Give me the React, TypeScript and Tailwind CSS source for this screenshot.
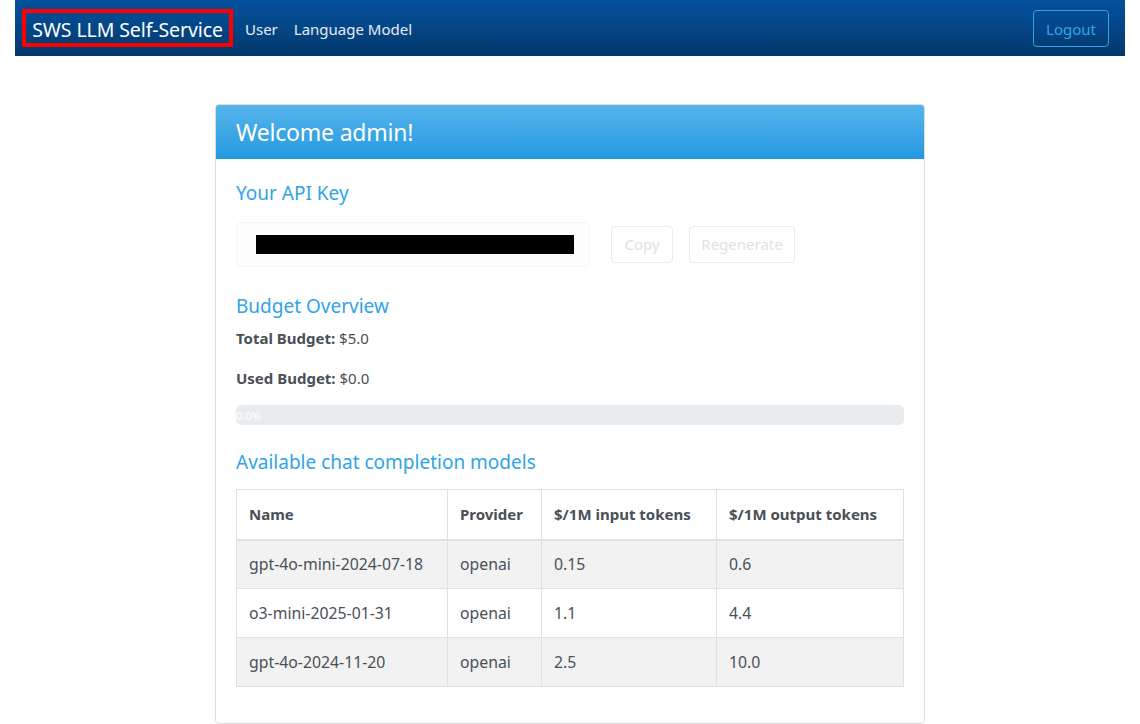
import React from "react";

const rows = [
  { name: "gpt-4o-mini-2024-07-18", provider: "openai", inp: "0.15", out: "0.6" },
  { name: "o3-mini-2025-01-31", provider: "openai", inp: "1.1", out: "4.4" },
  { name: "gpt-4o-2024-11-20", provider: "openai", inp: "2.5", out: "10.0" },
];

export default function App() {
  return (
    <div className="min-h-[724px] bg-white text-[#495057]" style={{ fontFamily: '"Noto Sans", "Open Sans", sans-serif' }}>
      <div className="mx-[15px] w-[1110px] h-[56px] flex items-center bg-gradient-to-b from-[#04519b] via-[#044687] to-[#033769]">
        <div className="ml-[7px] h-[38px] w-[211px] border-4 border-[#ff0000] flex items-center justify-center pt-[3px]">
          <span className="text-white text-[19.5px] leading-none tracking-[-0.1px]">SWS LLM Self-Service</span>
        </div>
        <a className="ml-[12px] mt-[3px] text-[15px] text-white/90">User</a>
        <a className="ml-[16px] mt-[3px] text-[15px] text-white/90">Language Model</a>
        <div className="flex-1" />
        <button className="mr-[16px] h-[37px] w-[76px] rounded-[4px] border border-[#2fa4e7] text-[#2fa4e7] text-[15px] pt-[2px]">Logout</button>
      </div>

      <div className="ml-[215px] mt-[48px] w-[710px] border border-[#dcdcdc] rounded-[4px] overflow-hidden">
        <div className="h-[54px] flex items-center px-[20px] bg-gradient-to-b from-[#54b4eb] to-[#2199e0]">
          <span className="text-white text-[23px] tracking-[-0.2px]">Welcome admin!</span>
        </div>
        <div className="px-[20px] pt-[22px] pb-[36px]">
          <h3 className="text-[#2fa4e7] text-[19px] leading-[24px]">Your API Key</h3>
          <div className="mt-[17px] flex items-center">
            <div className="w-[354px] h-[45px] bg-[#fdfdfd] border border-[#f6f6f6] rounded-[4px] flex items-center pl-[19px]">
              <div className="w-[318px] h-[19px] bg-black" />
            </div>
            <button className="ml-[21px] w-[62px] h-[37px] border border-[#e9ecef] rounded-[4px] text-[#dee2e6] text-[15px]">Copy</button>
            <button className="ml-[16px] w-[106px] h-[37px] border border-[#e9ecef] rounded-[4px] text-[#dee2e6] text-[15px]">Regenerate</button>
          </div>
          <h3 className="mt-[27px] text-[#2fa4e7] text-[19px] leading-[24px]">Budget Overview</h3>
          <p className="mt-[8px] text-[15px] leading-[24px]"><b className="font-bold">Total Budget:</b> $5.0</p>
          <p className="mt-[16px] text-[15px] leading-[24px]"><b className="font-bold">Used Budget:</b> $0.0</p>
          <div className="mt-[15px] h-[20px] w-[668px] bg-[#e9ecef] rounded-[5px] flex items-center">
            <span className="text-white text-[11px] leading-none">0.0%</span>
          </div>
          <h3 className="mt-[25px] text-[#2fa4e7] text-[19px] leading-[24px]">Available chat completion models</h3>
          <table className="mt-[15px] w-[668px] border-collapse text-[15px]">
            <thead>
              <tr className="h-[50px] border-b-2 border-[#dee2e6]">
                <th className="w-[211px] border border-[#dee2e6] border-b-2 text-left font-bold px-[12px]">Name</th>
                <th className="w-[94px] border border-[#dee2e6] border-b-2 text-left font-bold px-[12px]">Provider</th>
                <th className="w-[175px] border border-[#dee2e6] border-b-2 text-left font-bold px-[12px]">$/1M input tokens</th>
                <th className="border border-[#dee2e6] border-b-2 text-left font-bold px-[12px]">$/1M output tokens</th>
              </tr>
            </thead>
            <tbody className="text-[15.8px]">
              {rows.map((r, i) => (
                <tr key={r.name} className={i % 2 === 0 ? "h-[49px] bg-[#f2f2f2]" : "h-[49px] bg-white"}>
                  <td className="border border-[#dee2e6] px-[12px] pt-[2px]">{r.name}</td>
                  <td className="border border-[#dee2e6] px-[12px] pt-[2px]">{r.provider}</td>
                  <td className="border border-[#dee2e6] px-[12px] pt-[2px]">{r.inp}</td>
                  <td className="border border-[#dee2e6] px-[12px] pt-[2px]">{r.out}</td>
                </tr>
              ))}
            </tbody>
          </table>
        </div>
      </div>
    </div>
  );
}
